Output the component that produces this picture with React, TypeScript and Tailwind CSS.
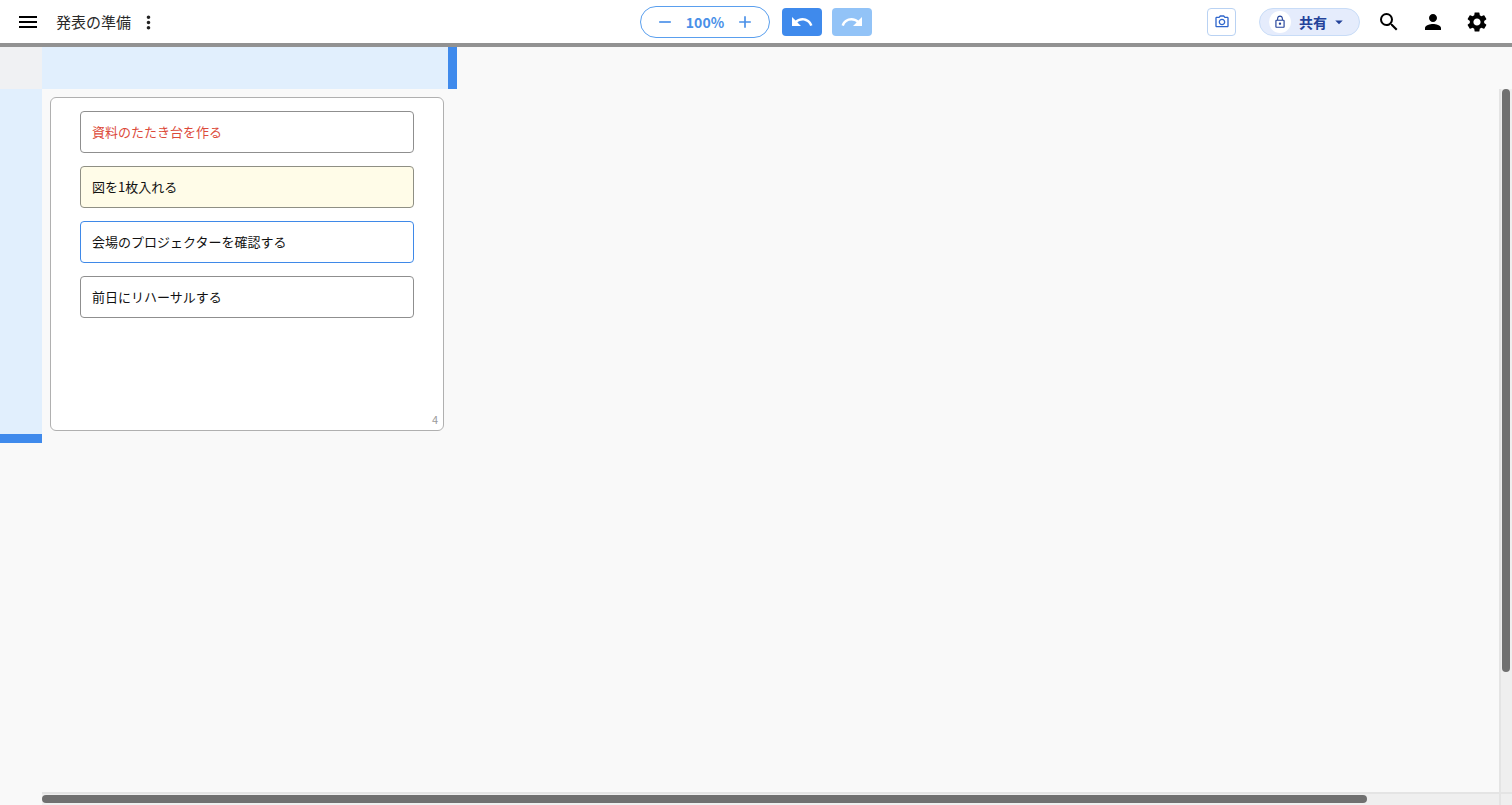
import { clsx } from "clsx";
import type { ReactNode } from "react";
import {
  MdAdd,
  MdArrowDropDown,
  MdLockOutline,
  MdMenu,
  MdMoreVert,
  MdOutlinePhotoCamera,
  MdPerson,
  MdRedo,
  MdRemove,
  MdSearch,
  MdSettings,
  MdUndo,
} from "react-icons/md";

type Item = {
  text: string;
  className: string;
};

const items: Item[] = [
  { text: "資料のたたき台を作る", className: "border-[#8f8f8f] bg-white text-[#dc4a3a]" },
  { text: "図を1枚入れる", className: "border-[#8f8f84] bg-[#fffce8] text-[#111]" },
  { text: "会場のプロジェクターを確認する", className: "border-[#3f89e8] bg-white text-[#111]" },
  { text: "前日にリハーサルする", className: "border-[#8f8f8f] bg-white text-[#111]" },
];

function IconButton({ label, children }: { label: string; children: ReactNode }) {
  return (
    <button
      type="button"
      aria-label={label}
      className="flex h-9 w-11 items-center justify-center text-black"
    >
      {children}
    </button>
  );
}

function Header() {
  return (
    <header className="grid h-[47px] shrink-0 grid-cols-[1fr_auto_1fr] items-center border-b-4 border-[#929292] bg-white pt-px">
      <div className="flex items-center pl-1.5">
        <IconButton label="メニュー">
          <MdMenu size={24} />
        </IconButton>
        <h1 className="ml-1.5 text-[15px] leading-6 text-[#2a2a2a]">発表の準備</h1>
        <button type="button" aria-label="その他" className="ml-[7px] text-[#222]">
          <MdMoreVert size={21} />
        </button>
      </div>

      <div className="flex items-center">
        <div className="flex h-8 w-[130px] items-center justify-between rounded-full border border-[#5a9fee] px-3.5 text-[#4a90e8]">
          <button type="button" aria-label="縮小">
            <MdRemove size={20} />
          </button>
          <span className="text-sm leading-5 font-bold">100%</span>
          <button type="button" aria-label="拡大">
            <MdAdd size={20} />
          </button>
        </div>
        <button
          type="button"
          aria-label="元に戻す"
          className="ml-3 flex h-7 w-10 items-center justify-center rounded bg-[#3f8aec] text-white"
        >
          <MdUndo size={24} />
        </button>
        <button
          type="button"
          aria-label="やり直す"
          className="ml-2.5 flex h-7 w-10 items-center justify-center rounded bg-[#92c3f7] text-white"
        >
          <MdRedo size={24} />
        </button>
      </div>

      <div className="flex items-center justify-end pr-[13px]">
        <button
          type="button"
          aria-label="スクリーンショット"
          className="flex h-7 w-[29px] items-center justify-center rounded border border-[#b9d2f3] text-[#2f66cc]"
        >
          <MdOutlinePhotoCamera size={16} />
        </button>
        <button
          type="button"
          className="ml-[23px] flex h-7 w-[101px] items-center rounded-full border border-[#c8dcf7] bg-[#e5ecfc] pl-[9px] text-[#23429a]"
        >
          <span className="flex size-[22px] items-center justify-center rounded-full bg-white">
            <MdLockOutline size={14} />
          </span>
          <span className="ml-2 text-sm leading-5 font-bold">共有</span>
          <MdArrowDropDown size={18} className="ml-[3px]" />
        </button>
        <div className="ml-[7px] flex">
          <IconButton label="検索">
            <MdSearch size={24} />
          </IconButton>
          <IconButton label="アカウント">
            <MdPerson size={24} />
          </IconButton>
          <IconButton label="設定">
            <MdSettings size={24} />
          </IconButton>
        </div>
      </div>
    </header>
  );
}

function Cell() {
  return (
    <section className="m-2 flex h-[334px] w-[394px] flex-col rounded-md border border-[#b0b0b0] bg-white">
      <ul className="flex flex-1 flex-col gap-[13px] px-[29px] pt-[13px]">
        {items.map((item) => (
          <li
            key={item.text}
            className={clsx(
              "flex h-[42px] items-center rounded-[4px] border px-[11px] text-[13px] leading-5",
              item.className,
            )}
          >
            {item.text}
          </li>
        ))}
      </ul>
      <span className="self-end px-[5px] pb-[3px] text-[11px] leading-4 text-[#999]">
        {items.length}
      </span>
    </section>
  );
}

export default function App() {
  return (
    <div className="flex h-screen flex-col bg-[#f9f9f9] font-['Noto_Sans_CJK_JP',sans-serif]">
      <Header />
      <main className="grid min-h-0 flex-1 grid-cols-[42px_1fr] grid-rows-[42px_1fr]">
        <div className="bg-[#f0f1f3]" />
        {/* column header with its resize handle */}
        <div className="flex">
          <div className="w-[415px] border-r-9 border-[#3f8aec] bg-[#e1effd]" />
        </div>
        {/* row header */}
        <div>
          <div className="h-[354px] border-b-9 border-[#3f8aec] bg-[#e1effd]" />
        </div>

        <div className="grid min-h-0 grid-cols-[1fr_13px] grid-rows-[1fr_13px]">
          <div className="overflow-hidden">
            <Cell />
          </div>
          <div className="border-l-2 border-[#e4e4e4] bg-[#efefef] px-px">
            <div className="h-[83%] w-2 rounded-full bg-[#707070]" />
          </div>
          <div className="border-t-2 border-[#e4e4e4] bg-[#efefef] py-px">
            <div className="h-2 w-10/11 rounded-full bg-[#707070]" />
          </div>
          <div className="border-t-2 border-l-2 border-[#e4e4e4] bg-[#efefef]" />
        </div>
      </main>
    </div>
  );
}
